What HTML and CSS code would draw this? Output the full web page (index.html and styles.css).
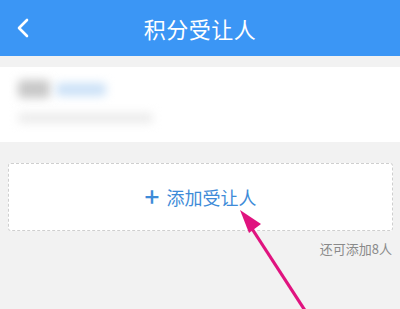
FILE: index.html
```html
<!DOCTYPE html>
<html lang="zh">
<head>
<meta charset="utf-8">
<link rel="stylesheet" href="styles.css">
</head>
<body>
<div class="page">
  <header class="topbar">
    <svg class="back" width="14" height="20" viewBox="0 0 14 20"><path d="M11 2 L3 10 L11 18" fill="none" stroke="#fff" stroke-width="2.6" stroke-linecap="round" stroke-linejoin="round"/></svg>
    <h1 class="title">积分受让人</h1>
  </header>
  <section class="card">
    <div class="row1"><span class="blob gray"></span><span class="blob blue"></span></div>
    <div class="row2"><span class="blob line"></span></div>
  </section>
  <div class="addbox">
    <span class="plus">+</span><span class="addtext">添加受让人</span>
  </div>
  <div class="remain">还可添加8人</div>
  <svg class="arrow" width="400" height="309" viewBox="0 0 400 309">
    <line x1="247" y1="221" x2="306" y2="312" stroke="#e0137f" stroke-width="3.2"/>
    <polygon points="240,210 261,224 249,233" fill="#e0137f"/>
  </svg>
</div>
</body>
</html>
```
FILE: styles.css
```css
html, body { margin: 0; padding: 0; }
body { background: #f2f2f2; font-family: "Noto Sans CJK SC", "Noto Sans", sans-serif; width: 400px; height: 309px; overflow: hidden; }
.page { position: relative; width: 400px; height: 309px; }
.topbar { height: 56px; background: #3b96f5; display: flex; align-items: center; justify-content: center; position: relative; }
.back { position: absolute; left: 16px; top: 18px; }
.title { margin: 0; color: #fff; font-size: 22px; font-weight: 400; letter-spacing: 0.5px; }
.card { margin-top: 11px; background: #fff; height: 75px; padding: 0 18px; box-sizing: border-box; }
.row1 { display: flex; padding-top: 13px; gap: 6px; align-items: center; }
.blob { display: block; filter: blur(5px); border-radius: 4px; }
.gray { width: 32px; height: 18px; background: #c8c8c8; }
.blue { width: 50px; height: 13px; background: #cbe1f7; }
.row2 { padding-top: 15px; }
.line { width: 135px; height: 10px; background: #ebebeb; }
.addbox { margin: 21px 7px 0 8px; height: 68px; background: #fff; border: 1.5px dashed #cfcfcf; border-radius: 3px; box-sizing: border-box; display: flex; align-items: center; justify-content: center; color: #3e8bd8; }
.plus { font-size: 26px; font-weight: 500; line-height: 1; margin-right: 7px; margin-top: -2px; }
.addtext { font-size: 18px; }
.remain { text-align: right; padding-right: 8px; margin-top: 8px; font-size: 13px; color: #8a8a8a; }
.arrow { position: absolute; left: 0; top: 0; }
```
